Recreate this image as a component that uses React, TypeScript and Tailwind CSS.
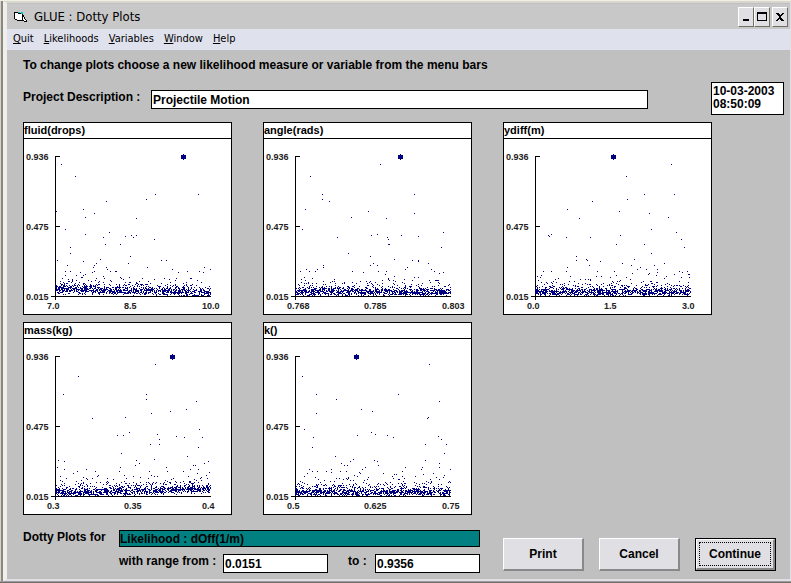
interface Plot {
  title: string;
  ticks: [string, string, string];
  best: number;
  // how far the cloud lifts off the axis at its left and right end
  lift: [number, number];
  seed: number;
  // x positions, one list for every row in SAMPLE_ROWS
  samples: number[][];
}

const AXIS_WIDTH = 155;
const AXIS_HEIGHT = 140;

const MENUS = ["Quit", "Likelihoods", "Variables", "Window", "Help"];

const SAMPLE_ROWS = [
  8, 20, 38, 43, 45, 53, 55, 57, 61, 62, 73, 76, 78, 79, 80, 81, 83, 88, 91,
  97, 100, 103, 104, 105, 107, 109, 111, 113, 115,
];

const PLOTS: Plot[] = [
  {
    title: "fluid(drops)",
    ticks: ["7.0", "8.5", "10.0"],
    best: 128,
    lift: [4, 0],
    seed: 11,
    samples: [
      [6], [20], [100, 143], [91], [51], [28], [1], [39], [30], [81], [10],
      [54], [30], [76, 81], [70], [48, 78], [99], [50, 65], [15], [15], [75],
      [45], [2, 106, 111], [28], [41, 73], [12, 39], [38, 51, 92, 149],
      [52, 117, 155], [0, 10, 15, 39, 55, 61, 144],
    ],
  },
  {
    title: "angle(rads)",
    ticks: ["0.768", "0.785", "0.803"],
    best: 105,
    lift: [1, 1],
    seed: 23,
    samples: [
      [85], [15], [27, 119], [27], [34], [10], [73], [119], [56], [91], [7],
      [148], [82], [76, 106], [123], [42, 92], [93], [93, 94], [146], [53],
      [75], [99], [117, 123], [123], [78, 133], [28, 75, 82], [28, 112],
      [11, 22, 110, 136], [14, 20, 57, 83, 91, 139],
    ],
  },
  {
    title: "ydiff(m)",
    ticks: ["0.0", "1.5", "3.0"],
    best: 78,
    lift: [1, 1],
    seed: 37,
    samples: [
      [136], [91], [109, 139], [92], [57], [32], [84], [114], [133], [44],
      [116], [141], [16], [13, 85], [14], [31, 55], [146], [81, 109], [149],
      [116], [41], [51, 99], [41, 52], [65], [87, 129], [54, 96, 119],
      [32, 105], [102, 111, 122], [8, 16, 79, 62, 144],
    ],
  },
  {
    title: "mass(kg)",
    ticks: ["0.3", "0.35", "0.4"],
    best: 117,
    lift: [0, 4],
    seed: 41,
    samples: [
      [100], [23], [8, 91], [91], [141], [131], [115], [96], [70], [37],
      [144], [74], [102], [62, 68], [121], [129, 147], [104], [95, 104],
      [143], [66], [132], [99], [3, 81], [9, 153], [84, 149],
      [80, 138, 140], [2, 65, 111], [9, 31, 135, 143],
      [22, 40, 64, 112, 128],
    ],
  },
  {
    title: "k()",
    ticks: ["0.5", "0.625", "0.75"],
    best: 61,
    lift: [1, 1],
    seed: 59,
    samples: [
      [134], [7], [21, 103], [41], [144], [66], [77], [21], [133], [132], [9],
      [76], [80], [62, 92], [143], [18, 98], [146], [130, 151], [17], [149],
      [40], [58], [79, 130], [55, 82], [46, 144], [49, 52, 83],
      [70, 110, 127, 144], [14, 36, 67, 126, 155],
      [17, 22, 31, 45, 51, 107],
    ],
  },
];

function createRandom(seed: number) {
  let state = seed * 7919;
  return () => {
    state = (state * 16807) % 2147483647;
    return state / 2147483647;
  };
}

function cloudPath(plot: Plot) {
  const random = createRandom(plot.seed);
  let d = "";
  plot.samples.forEach((xs, row) => {
    xs.forEach((x) => {
      d += `M${x} ${SAMPLE_ROWS[row]}h1v1h-1z`;
    });
  });
  for (let i = 0; i < 1150; i++) {
    const x = Math.floor(random() * (AXIS_WIDTH + 1));
    const t = x / AXIS_WIDTH;
    const base = plot.lift[0] * (1 - t) + plot.lift[1] * t;
    const scale = random() < 0.25 ? 6 : 2;
    const height = base * (0.5 + random()) + random() * 5 - Math.log(1 - random()) * scale;
    if (height > 26) continue;
    d += `M${x} ${AXIS_HEIGHT - Math.floor(height)}h1v1h-1z`;
  }
  return d;
}

function DottyPlot({ plot }: { plot: Plot }) {
  return (
    <section className="border border-black bg-white">
      <h2 className="h-4 border-b border-black text-[11px] leading-[14px] font-bold">
        {plot.title}
      </h2>
      <svg
        viewBox="0 0 207 175"
        className="block w-full"
        shapeRendering="crispEdges"
        role="img"
        aria-label={plot.title}
      >
        <g fill="#000">
          <rect x="31" y="17" width="1" height="144" />
          <rect x="27" y="157" width="160" height="1" />
          <rect x="31" y="17" width="5" height="1" />
          <rect x="31" y="87" width="5" height="1" />
        </g>
        <g transform="translate(31 17)" fill="#000080">
          <path d={cloudPath(plot)} />
          <path
            transform={`translate(${plot.best} 0)`}
            d="M-2 -1h2v-1h1v1h2v4h-2v1h-1v-1h-2z"
          />
        </g>
        <g className="text-[9px] font-bold" fill="#222">
          <text x="2" y="21">0.936</text>
          <text x="2" y="91">0.475</text>
          <text x="2" y="161">0.015</text>
          <text x="23" y="170">{plot.ticks[0]}</text>
          <text x="100" y="170">{plot.ticks[1]}</text>
          <text x="178" y="170">{plot.ticks[2]}</text>
        </g>
      </svg>
    </section>
  );
}

function FormIcon() {
  return (
    <svg width="14" height="12" viewBox="0 0 14 12" shapeRendering="crispEdges" aria-hidden="true">
      <path d="M0 1h4v1h5v2h1v2h1v2h1v1h1v2h-3v-1h-7v-1h-2v-1h-1z" fill="#000" />
      <path d="M1 2h3v1h4v6h-5v-1h-2z" fill="#fff" />
      <path d="M9 6h1v2h1v1h1v1h-2v-1h-1z" fill="#fff" />
      <path d="M4 1h2v1h-2zM7 1h2v2h-2z" fill="#00c8c8" />
    </svg>
  );
}

const captionButton =
  "flex h-5 w-4 items-center justify-center border border-t-white border-l-white border-r-[#716f64] border-b-[#716f64] bg-[#e0dfe3]";

function TitleBar() {
  return (
    <header className="flex h-[25px] items-center bg-[#c8c8c8] pr-0.5 pl-[7px]">
      <FormIcon />
      <h1 className="ml-[6px] flex-1 font-['DejaVu_Sans_Condensed','DejaVu_Sans',sans-serif] text-[13px] font-normal">
        GLUE : Dotty Plots
      </h1>
      <button type="button" aria-label="Minimize" className={captionButton}>
        <svg width="12" height="12" shapeRendering="crispEdges">
          <rect x="3" y="8" width="6" height="2" />
        </svg>
      </button>
      <button type="button" aria-label="Maximize" className={captionButton}>
        <svg width="12" height="12" shapeRendering="crispEdges">
          <path d="M1 1h10v9h-10zM2 3v6h8v-6z" fillRule="evenodd" />
        </svg>
      </button>
      <button type="button" aria-label="Close" className={`${captionButton} ml-0.5`}>
        <svg width="12" height="12" shapeRendering="crispEdges">
          <path d="M2 2h3v1h1v1h1v-1h1v-1h2v1h-1v1h-1v1h-1v2h1v1h1v1h1v1h-3v-1h-1v-1h-1v1h-1v1h-2v-1h1v-1h1v-1h1v-2h-1v-1h-1v-1h-1z" />
        </svg>
      </button>
    </header>
  );
}

function MenuBar() {
  return (
    <nav className="flex h-[21px] items-center gap-2.5 bg-[#dfe1ec] pl-1.5 font-['DejaVu_Sans_Condensed','DejaVu_Sans',sans-serif] text-[11px]">
      {MENUS.map((menu) => (
        <button key={menu} type="button">
          <u>{menu[0]}</u>
          {menu.slice(1)}
        </button>
      ))}
    </nav>
  );
}

const field = "h-[19px] min-w-0 border border-black bg-white px-px font-bold";
const pushButton =
  "h-[33px] w-[81px] border-t border-l border-r-2 border-b-2 border-t-white border-l-white border-r-[#8a888a] border-b-[#8a888a] bg-[#e0dfe3] text-[12px] font-bold";

export default function App() {
  return (
    <div className="flex min-h-screen flex-col border-b border-[#716f64] bg-[#9d9da1] pb-px">
      <div className="flex flex-1 border-t border-[#f1efe2] bg-[#d8d4cc]">
        <div className="w-[3px] border-r-2 border-[#8a8880]" />
        <div className="flex min-w-0 flex-1 flex-col border-t-2 border-r border-b-2 border-l-4 border-t-[#d8d6d0] border-r-[#e0dfe3] border-b-[#e0dfe3] border-l-[#f0efea] bg-[#c0c0c0] pt-px font-['Liberation_Sans',Arial,sans-serif] text-black">
          <TitleBar />
          <MenuBar />
          <main className="flex-1 pt-2 pr-1.5 pb-[6px] pl-4 text-[12px] leading-[14px] font-bold">
            <div className="flex gap-[63px]">
              <div className="min-w-0 flex-1">
                <p>To change plots choose a new likelihood measure or variable from the menu bars</p>
                <div className="mt-[18px] flex">
                  <label htmlFor="project" className="w-32">
                    Project Description :
                  </label>
                  <input id="project" defaultValue="Projectile Motion" className={`${field} flex-1`} />
                </div>
              </div>
              <time className="mt-6 h-[33px] w-[73px] shrink-0 border border-black bg-white px-px pt-0.5 leading-[13px]">
                10-03-2003 08:50:09
              </time>
            </div>

            <div className="mt-[7px] mr-[72px] grid grid-cols-3 gap-x-[31px] gap-y-[7px]">
              {PLOTS.map((plot) => (
                <DottyPlot key={plot.title} plot={plot} />
              ))}
            </div>

            <div className="mt-[15px] mr-2 flex gap-[23px]">
              <div className="min-w-0 flex-1">
                <div className="flex">
                  <label htmlFor="measure" className="w-24">
                    Dotty Plots for
                  </label>
                  <input
                    id="measure"
                    readOnly
                    value="Likelihood : dOff(1/m)"
                    className="h-[17px] min-w-0 flex-1 border border-black bg-[#008080] font-bold"
                  />
                </div>
                <div className="mt-[7px] flex pl-24">
                  <label htmlFor="from" className="w-[104px]">
                    with range from :
                  </label>
                  <input id="from" defaultValue="0.0151" className={`${field} flex-1`} />
                  <label htmlFor="to" className="w-[47px] pl-5">
                    to :
                  </label>
                  <input id="to" defaultValue="0.9356" className={`${field} flex-1`} />
                </div>
              </div>
              <div className="mt-2 flex gap-[15px]">
                <button type="button" className={pushButton}>
                  Print
                </button>
                <button type="button" className={pushButton}>
                  Cancel
                </button>
                <div className="h-[33px] w-[81px] border border-black">
                  <button
                    type="button"
                    className="h-full w-full border-t border-l border-r-2 border-b-2 border-t-white border-l-white border-r-[#8a888a] border-b-[#8a888a] bg-[#e0dfe3] p-0.5 text-[12px] font-bold"
                  >
                    <span className="flex h-full items-center justify-center border border-dotted border-black">
                      Continue
                    </span>
                  </button>
                </div>
              </div>
            </div>
          </main>
        </div>
      </div>
    </div>
  );
}
